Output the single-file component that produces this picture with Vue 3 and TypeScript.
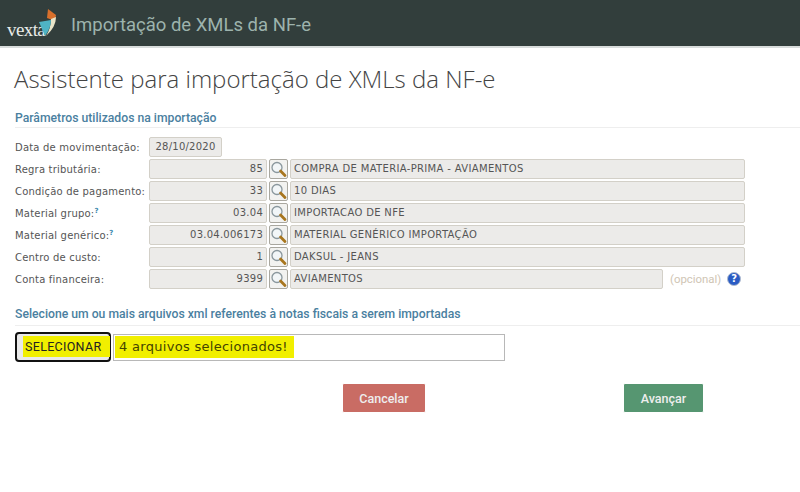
<script setup lang="ts">
interface Row { label: string; code: string; text: string; hint?: boolean; short?: boolean }
const rows: Row[] = [
  { label: 'Regra tributária:', code: '85', text: 'COMPRA DE MATERIA-PRIMA - AVIAMENTOS' },
  { label: 'Condição de pagamento:', code: '33', text: '10 DIAS' },
  { label: 'Material grupo:', code: '03.04', text: 'IMPORTACAO DE NFE', hint: true },
  { label: 'Material genérico:', code: '03.04.006173', text: 'MATERIAL GENÉRICO IMPORTAÇÃO', hint: true },
  { label: 'Centro de custo:', code: '1', text: 'DAKSUL - JEANS' },
  { label: 'Conta financeira:', code: '9399', text: 'AVIAMENTOS', short: true },
]
</script>

<template>
  <div class="page">
    <header class="top">
      <div class="logo">
        <span class="logo-word">vexta</span>
        <svg class="logo-mark" width="20" height="28" viewBox="0 0 20 28">
          <path d="M11 0 L19 6 L18 12 L10 9 Z" fill="#d9702c" />
          <path d="M14 10 L19 8 Q19 18 9 27 Q14 19 14 10 Z" fill="#e9e4c8" />
          <path d="M2 13 L14 11 Q14 19 8 27 Z" fill="#4fb3c4" />
        </svg>
      </div>
      <span class="top-title">Importação de XMLs da NF-e</span>
    </header>

    <main class="content">
      <h1 class="title">Assistente para importação de XMLs da NF-e</h1>

      <h2 class="section">Parâmetros utilizados na importação</h2>
      <div class="form">
        <div class="row">
          <label class="label">Data de movimentação:</label>
          <div class="field date">28/10/2020</div>
        </div>
        <div v-for="r in rows" :key="r.label" class="row">
          <label class="label">{{ r.label }}<sup v-if="r.hint" class="hint">?</sup></label>
          <div class="field code">{{ r.code }}</div>
          <button class="lookup" type="button" aria-label="Pesquisar">
            <svg width="17" height="17" viewBox="0 0 17 17">
              <circle cx="7" cy="6.5" r="5" fill="#f2f6f8" stroke="#8a979d" stroke-width="1.3" />
              <path d="M10.6 10 L15 14.5" stroke="#a8761f" stroke-width="2.8" stroke-linecap="round" />
            </svg>
          </button>
          <div class="field desc" :class="{ short: r.short }">{{ r.text }}</div>
          <template v-if="r.short">
            <span class="optional">(opcional)</span>
            <span class="help">?</span>
          </template>
        </div>
      </div>

      <h2 class="section second">Selecione um ou mais arquivos xml referentes à notas fiscais a serem importadas</h2>
      <div class="picker">
        <button class="select" type="button"><span class="mark">SELECIONAR</span></button>
        <div class="file"><span class="mark big">4 arquivos selecionados!</span></div>
      </div>

      <div class="actions">
        <button class="btn cancel" type="button">Cancelar</button>
        <button class="btn next" type="button">Avançar</button>
      </div>
    </main>
  </div>
</template>

<style>
html, body { margin: 0; background: #fff; }
</style>

<style scoped>
.page { width: 800px; height: 492px; overflow: hidden; background: #fff; font-family: "DejaVu Sans", sans-serif; }
.top { height: 46px; background: #323e3c; border-bottom: 2px solid #d8dcdb; display: flex; align-items: center; }
.logo { position: relative; width: 71px; height: 46px; flex: none; }
.logo-word { position: absolute; left: 7px; top: 20px; font: 19px/20px "Liberation Serif", serif; letter-spacing: -0.6px; color: #e8ebe8; }
.logo-mark { position: absolute; left: 37px; top: 9px; }
.top-title { padding-top: 3px; font: 18.5px "Roboto", sans-serif; color: #9db3ad; }
.content { padding: 0 0 0 15px; }
.title { margin: 14px 0 0 -1px; font: 300 24px/34px "Open Sans", sans-serif; color: #444; }
.section { margin: 13px 0 0 0; height: 18px; font: 500 12.2px/19px "Roboto", sans-serif; color: #4a80a0; border-bottom: 1px solid #eee; }
.section.second { margin-top: 15px; height: 21px; line-height: 21px; }
.form { margin-top: 9px; display: flex; flex-direction: column; gap: 2px; }
.row { display: flex; align-items: center; height: 20px; }
.label { width: 134px; flex: none; font-size: 10px; color: #555; letter-spacing: 0.2px; white-space: nowrap; }
.hint { font-size: 7px; font-weight: bold; color: #3a87ad; line-height: 0; }
.field { height: 20px; box-sizing: border-box; background: #ecebe9; border: 1px solid #d3d0c8; border-radius: 2px; font-size: 10px; line-height: 18px; color: #555; padding: 0 3px; letter-spacing: 0.25px; white-space: nowrap; }
.date { width: 73px; text-align: center; }
.code { width: 118px; text-align: right; }
.lookup { width: 19px; height: 20px; margin: 0 2px; padding: 0; box-sizing: border-box; background: #f2f2f0; border: 1px solid #a9a79f; border-radius: 2px; display: flex; align-items: center; justify-content: center; }
.desc { width: 455px; letter-spacing: 0.34px; }
.desc.short { width: 373px; }
.optional { margin-left: 7px; font: 11.4px "Roboto", sans-serif; color: #cfc5b4; }
.help { margin-left: 6px; width: 14px; height: 14px; border-radius: 50%; background: #2a5cc4; border: 1px solid #b0bcd0; box-sizing: border-box; color: #fff; font: bold 10px/12px "DejaVu Sans", sans-serif; text-align: center; }
.picker { margin-top: 6px; display: flex; align-items: center; }
.select { width: 96px; height: 30px; padding: 0 0 0 6px; box-sizing: border-box; background: #e9e9e9; border: 2px solid #111; border-radius: 4px; font: 400 12.5px "Roboto", sans-serif; color: #222; text-align: left; display: flex; align-items: center; }
.mark { background: #f1ef00; }
.select .mark { padding: 3px 2px; margin-top: -1px; box-shadow: 7px 0 0 #f1ef00; letter-spacing: 0.3px; }
.file { width: 392px; height: 27px; margin-left: 2px; box-sizing: border-box; background: #fff; border: 1px solid #b8b8b8; padding: 0 0 0 1px; display: flex; align-items: center; }
.mark.big { font-size: 13px; line-height: 22px; padding: 0 6px 0 4px; color: #444400; letter-spacing: 0.3px; }
.actions { margin-top: 21px; margin-left: 327px; display: flex; gap: 197px; }
.btn { height: 30px; box-sizing: border-box; border: 1px solid #fff; border-radius: 2px; color: #eee; font: 500 12.5px "Roboto", sans-serif; padding: 0; }
.cancel { width: 84px; background: #c96c64; }
.next { width: 81px; background: #569671; }
</style>
